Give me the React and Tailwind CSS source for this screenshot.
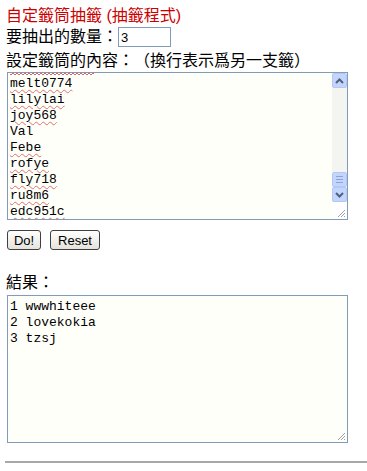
import { useState } from "react";

const entries = [
  "melt0774",
  "lilylai",
  "joy568",
  "Val",
  "Febe",
  "rofye",
  "fly718",
  "ru8m6",
  "edc951c",
];

const results = ["1 wwwhiteee", "2 lovekokia", "3 tzsj"];

const cjk = { fontFamily: '"Liberation Sans", "Noto Sans CJK TC", sans-serif' };
const mono = { fontFamily: '"Liberation Mono", monospace' };

function Chevron({ up }) {
  return (
    <svg width="9" height="6" viewBox="0 0 9 6">
      <path
        d={up ? "M1 5 L4.5 1.5 L8 5" : "M1 1 L4.5 4.5 L8 1"}
        fill="none"
        stroke="#4d6185"
        strokeWidth="2"
      />
    </svg>
  );
}

function Grip() {
  return (
    <svg width="10" height="10" viewBox="0 0 10 10">
      <path d="M9 2 L2 9 M9 5 L5 9 M9 8 L8 9" stroke="#a0a0a0" strokeWidth="1" />
    </svg>
  );
}

function Squiggle({ width }) {
  let d = "M0 1";
  for (let x = 0; x < width; x += 2) d += ` L${x + 1} ${x % 4 === 0 ? 2 : 0} L${x + 2} 1`;
  return (
    <svg width={width} height="3" viewBox={`0 0 ${width} 3`} className="block">
      <path d={d} fill="none" stroke="#e06060" strokeWidth="1" />
    </svg>
  );
}

function ScrollBar() {
  return (
    <div className="w-[15px] flex flex-col bg-[#f4f4f0]">
      <div className="h-[15px] flex items-center justify-center bg-[#c4d5fb] border border-[#b4c8f6] rounded-[2px]">
        <Chevron up />
      </div>
      <div className="flex-1" />
      <div className="h-[15px] flex flex-col items-center justify-center gap-[2px] bg-[#c4d5fb] border border-[#b4c8f6] rounded-[2px]">
        <div className="w-[7px] h-px bg-[#8ea4d6]" />
        <div className="w-[7px] h-px bg-[#8ea4d6]" />
        <div className="w-[7px] h-px bg-[#8ea4d6]" />
      </div>
      <div className="h-[15px] flex items-center justify-center bg-[#c4d5fb] border border-[#b4c8f6] rounded-[2px]">
        <Chevron />
      </div>
      <div className="h-[17px] flex items-end justify-end pr-[1px] pb-[1px] bg-white">
        <Grip />
      </div>
    </div>
  );
}

export default function App() {
  const [count, setCount] = useState("3");

  return (
    <div
      className="w-[367px] h-[471px] bg-white pl-[6px] pt-[4px] text-black [text-spacing-trim:space-all]"
      style={cjk}
    >
      <div className="h-[23px] leading-[23px] text-[16px] text-[#cc0000]">
        自定籤筒抽籤 (抽籤程式)
      </div>
      <div className="h-[20px] flex items-center text-[16px]">
        要抽出的數量：
        <input
          value={count}
          onChange={(e) => setCount(e.target.value)}
          className="w-[53px] h-[20px] border border-[#7f9db9] px-[2px] text-[13px] outline-none"
          style={{ fontFamily: '"Liberation Sans", sans-serif' }}
        />
      </div>
      <div className="h-[20px] mt-[4px] flex items-center text-[16px]">
        設定籤筒的內容：（換行表示爲另一支籤）
      </div>

      <div className="ml-[1px] mt-[1px] w-[341px] h-[148px] border border-[#7f9db9] bg-[#fffffa] flex">
        <div className="flex-1 overflow-hidden pl-[2px] text-[13px]" style={mono}>
          <Squiggle width={84} />
          {entries.map((e) => (
            <div key={e} className="h-[16px] leading-[15px]">
              <span
                className={
                  e === "Val"
                    ? ""
                    : "underline decoration-wavy decoration-[#e07070] decoration-1 underline-offset-[2px]"
                }
              >
                {e}
              </span>
            </div>
          ))}
        </div>
        <ScrollBar />
      </div>

      <div
        className="mt-[10px] ml-[1px] flex gap-[9px] text-[13px]"
        style={{ fontFamily: '"Liberation Sans", sans-serif' }}
      >
        <button className="w-[34px] h-[20px] border border-[#404040] rounded-[3px] bg-linear-to-b from-white to-[#e4e3dc] leading-none">
          Do!
        </button>
        <button className="w-[50px] h-[20px] border border-[#404040] rounded-[3px] bg-linear-to-b from-white to-[#e4e3dc] leading-none">
          Reset
        </button>
      </div>

      <div className="h-[20px] mt-[23px] flex items-center text-[16px]">結果：</div>

      <div className="ml-[1px] mt-[2px] w-[341px] h-[148px] border border-[#7f9db9] bg-[#fffffa] flex">
        <div className="flex-1 pl-[2px] pt-[3px] text-[13px]" style={mono}>
          {results.map((r) => (
            <div key={r} className="h-[16px] leading-[16px] whitespace-pre">
              {r}
            </div>
          ))}
        </div>
        <div className="self-end pr-[1px] pb-[1px]">
          <Grip />
        </div>
      </div>

      <div className="mt-[18px] -ml-[1px] border-t-2 border-[#a8a8a8]" />
    </div>
  );
}
